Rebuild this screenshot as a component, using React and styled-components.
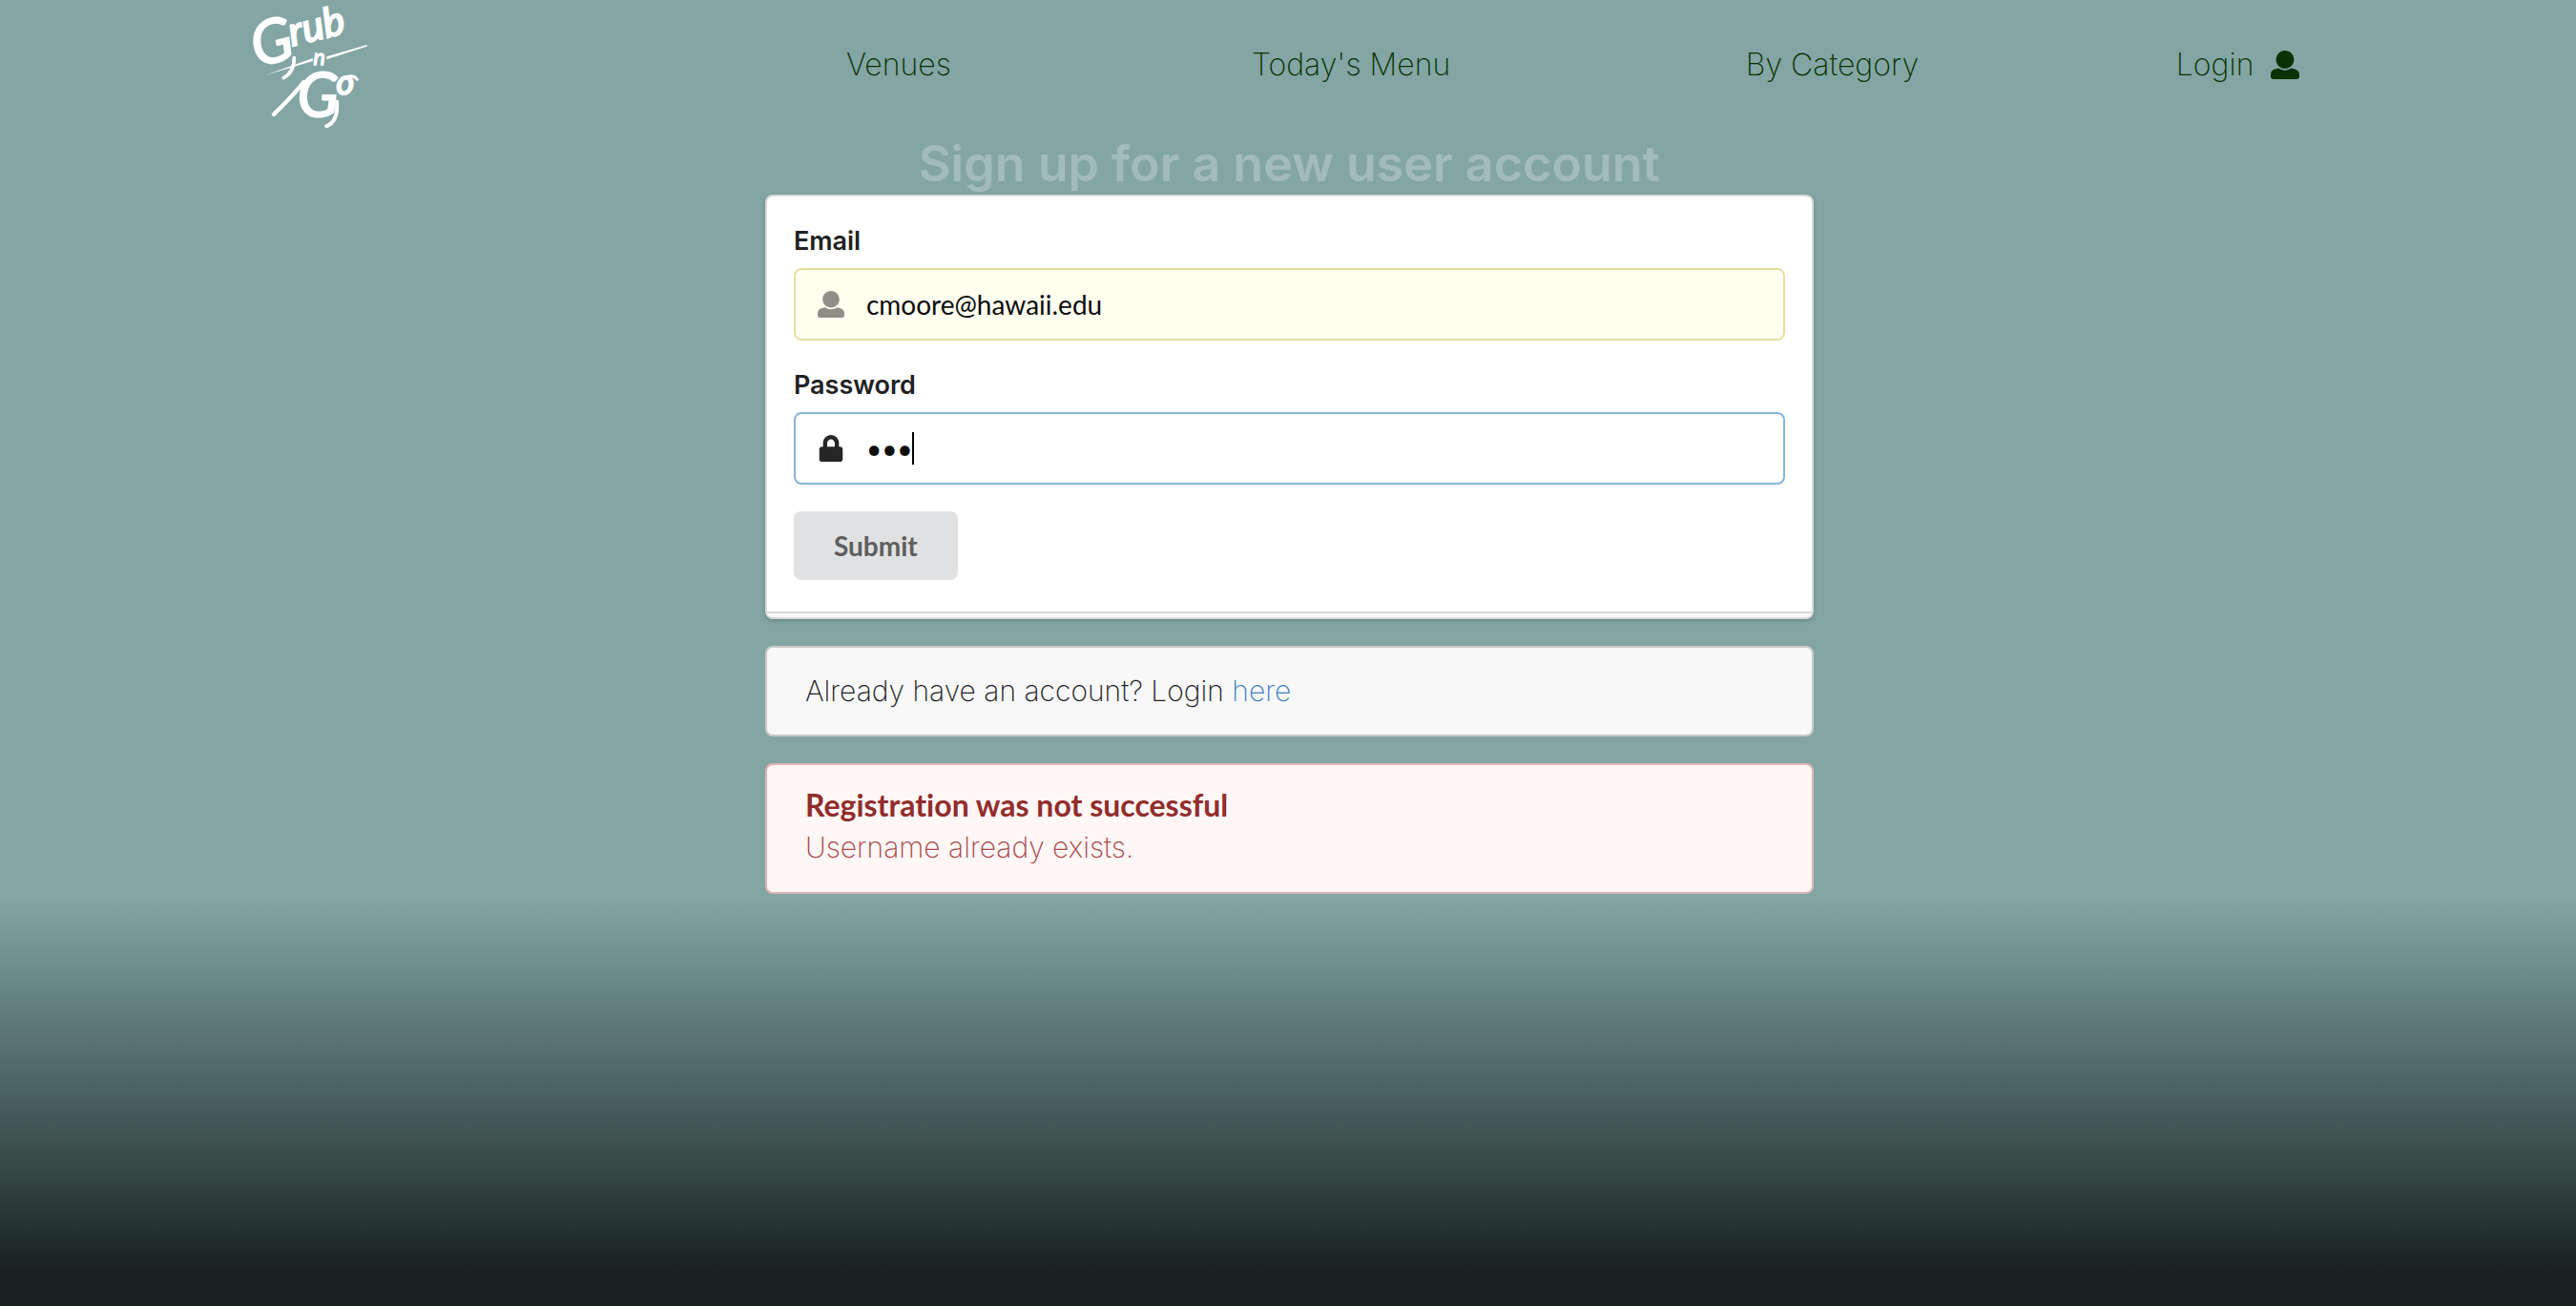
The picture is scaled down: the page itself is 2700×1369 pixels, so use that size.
import React from "react";
import styled, { createGlobalStyle } from "styled-components";
import { FaLock } from "react-icons/fa";

const sans = `Inter, "Open Sans", sans-serif`;
const lato = `Lato, "Open Sans", sans-serif`;

const GlobalStyle = createGlobalStyle`
  *, *::before, *::after { box-sizing: border-box; }
  body { margin: 0; background: #1a2022; }
`;

const Page = styled.div`
  display: flex;
  flex-direction: column;
  min-height: 100vh;
  font-family: ${sans};
  font-size: 30px;
  font-weight: 200;
  font-variant-ligatures: none;
  color: #212121;
  background: linear-gradient(
    to bottom,
    #83a6a5 0,
    #83a6a5 68.5%,
    #6f9090 73.5%,
    #5f7a7a 78%,
    #4d6465 83%,
    #3f5350 87%,
    #334341 90.5%,
    #243231 94%,
    #1a2123 97.2%,
    #1a2022 100%
  );
`;

const Header = styled.header`
  display: grid;
  grid-template-columns: 627fr 425fr 518fr 451fr 133fr;
  align-items: center;
  height: 136px;
  padding: 0 10.6% 0 9.63%;
`;

const Brand = styled.a`
  display: block;
  height: 136px;
`;

const LogoArt = styled.svg`
  display: block;
  overflow: visible;
`;

const Nav = styled.nav`
  display: contents;
`;

const NavLink = styled.a`
  display: flex;
  align-items: center;
  gap: 18px;
  color: #0a3200;
  font-size: 32px;
  line-height: 36px;
  text-decoration: none;
  white-space: nowrap;
`;

const Main = styled.main`
  display: flex;
  flex-direction: column;
  gap: 28px;
  width: 40.7%;
  margin: 0 0 0 29.7%;
`;

const Title = styled.h2`
  margin: 0;
  padding: 6px 0 2px;
  color: rgba(255, 255, 255, 0.25);
  font-size: 52px;
  font-weight: 600;
  line-height: 60px;
  text-align: center;
  white-space: nowrap;
`;

const Card = styled.form`
  border: 2px solid #d9d9da;
  border-radius: 8px;
  background: #fff;
  box-shadow: 0 2px 4px rgba(34, 36, 38, 0.25);
  overflow: hidden;
`;

const Fields = styled.div`
  display: flex;
  flex-direction: column;
  align-items: stretch;
  gap: 28px;
  padding: 28px 28px 33px;
`;

const Field = styled.div`
  display: flex;
  flex-direction: column;
  gap: 10px;
`;

const Label = styled.label`
  color: #212121;
  font-size: 27px;
  font-weight: 600;
  line-height: 37px;
`;

const InputBox = styled.div`
  position: relative;
  display: flex;
  align-items: center;
  height: 76px;
  padding-left: 23px;
  border: 2px solid ${(p) => (p.$filled ? "#e5dfa1" : "#85b7d9")};
  border-radius: 8px;
  background: ${(p) => (p.$filled ? "#fffff0" : "#fff")};
  color: ${(p) => (p.$filled ? "#8f8f87" : "#262626")};
`;

const Input = styled.input`
  flex: 1;
  min-width: 0;
  height: 72px;
  padding: 0 28px 0 23px;
  border: 0;
  outline: 0;
  background: transparent;
  color: #0d0d0d;
  caret-color: transparent;
  font-family: ${lato};
  font-size: 28px;
  font-weight: 400;
`;

const Caret = styled.span`
  position: absolute;
  left: 122px;
  top: 19px;
  width: 2px;
  height: 34px;
  background: #000;
  pointer-events: none;
`;

const IconSlot = styled.span`
  display: flex;
  justify-content: center;
  width: 28px;
`;

const Submit = styled.button`
  align-self: flex-start;
  height: 72px;
  padding: 0 42px;
  border: 0;
  border-radius: 8px;
  background: #e0e1e2;
  color: #5e5e5e;
  font-family: ${lato};
  font-size: 28px;
  font-weight: 700;
`;

const Stack = styled.div`
  height: 6px;
  border-top: 2px solid #d9d9da;
  background: #f8f8f8;
`;

const Message = styled.div`
  padding: ${(p) => (p.$error ? "22px 40px 28px" : "26px 40px 27px")};
  border: 2px solid ${(p) => (p.$error ? "#e0b4b4" : "#c9caca")};
  border-radius: 8px;
  background: ${(p) => (p.$error ? "#fff6f6" : "#f8f8f9")};
  color: ${(p) => (p.$error ? "#a8494a" : "#212121")};
`;

const MessageTitle = styled.h3`
  margin: 0 0 5px;
  color: #912d2b;
  font-family: ${lato};
  font-size: 32px;
  font-weight: 700;
  line-height: 40px;
`;

const MessageText = styled.p`
  margin: 0;
  line-height: 38px;
`;

const InlineLink = styled.a`
  color: #4183c4;
  text-decoration: none;
`;

function UserIcon({ size }) {
  return (
    <svg width={size} height={size} viewBox="0 0 512 512" fill="currentColor" aria-hidden="true">
      <path d="M256 0c88.366 0 160 71.634 160 160s-71.634 160-160 160S96 248.366 96 160 167.634 0 256 0zm183.283 333.821l-71.313-17.828c-74.923 53.89-165.738 41.864-223.94 0l-71.313 17.828C29.981 344.505 0 382.903 0 426.955V464c0 26.51 21.49 48 48 48h416c26.51 0 48-21.49 48-48v-37.045c0-44.052-29.981-82.45-72.717-93.134z" />
    </svg>
  );
}

function Logo() {
  return (
    <LogoArt width="133" height="136" viewBox="60 0 400 408" role="img" aria-label="Grub n Go" fill="#fff">
      <g fontFamily={lato} fontStyle="italic" fontWeight="400" stroke="#fff" strokeWidth="6">
        <g transform="rotate(-14 90 215)">
          <text x="88" y="210" fontSize="190">G</text>
          <text x="212" y="174" fontSize="128">rub</text>
        </g>
        <text x="266" y="203" fontSize="70" strokeWidth="4">n</text>
        <text x="216" y="366" fontSize="190">G</text>
        <text x="338" y="298" fontSize="108">o</text>
      </g>
      <path d="M113 237 L264 183 V192 Z M308 178 L435 141 L436 145 L308 187 Z" />
      <g fill="none" stroke="#fff" strokeLinecap="round" strokeLinejoin="round">
        <path d="M205 182 Q206 226 172 245" strokeWidth="11" />
        <path d="M141 360 Q196 308 236 258" strokeWidth="13" />
        <path d="M340 320 Q344 384 307 397" strokeWidth="12" />
        <path d="M374 241 Q394 236 404 250" strokeWidth="9" />
      </g>
    </LogoArt>
  );
}

export default function App() {
  return (
    <Page>
      <GlobalStyle />
      <Header>
        <Brand href="#">
          <Logo />
        </Brand>
        <Nav>
          <NavLink href="#">Venues</NavLink>
          <NavLink href="#">Today's Menu</NavLink>
          <NavLink href="#">By Category</NavLink>
          <NavLink href="#">
            Login
            <UserIcon size={30} />
          </NavLink>
        </Nav>
      </Header>
      <Main>
        <div>
          <Title>Sign up for a new user account</Title>
          <Card onSubmit={(e) => e.preventDefault()}>
            <Fields>
              <Field>
                <Label htmlFor="email">Email</Label>
                <InputBox $filled>
                  <IconSlot>
                    <UserIcon size={28} />
                  </IconSlot>
                  <Input id="email" type="email" defaultValue="cmoore@hawaii.edu" />
                </InputBox>
              </Field>
              <Field>
                <Label htmlFor="password">Password</Label>
                <InputBox>
                  <IconSlot>
                    <FaLock size={28} aria-hidden="true" />
                  </IconSlot>
                  <Input id="password" type="password" defaultValue="foo" autoFocus />
                  <Caret aria-hidden="true" />
                </InputBox>
              </Field>
              <Submit type="submit">Submit</Submit>
            </Fields>
            <Stack />
          </Card>
        </div>
        <Message>
          <MessageText>
            Already have an account? Login <InlineLink href="#">here</InlineLink>
          </MessageText>
        </Message>
        <Message $error role="alert">
          <MessageTitle>Registration was not successful</MessageTitle>
          <MessageText>Username already exists.</MessageText>
        </Message>
      </Main>
    </Page>
  );
}
